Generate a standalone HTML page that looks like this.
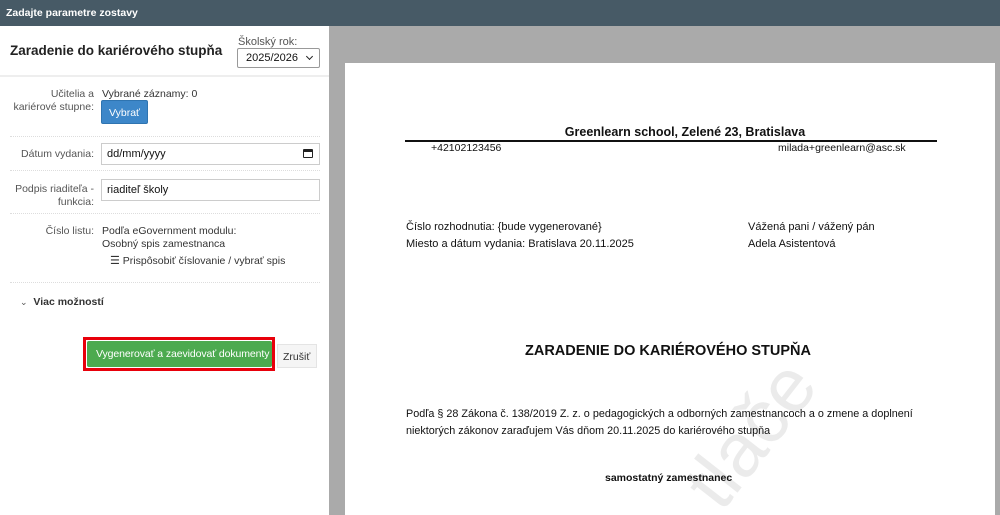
<!DOCTYPE html>
<html><head><meta charset="utf-8"><style>
*{box-sizing:border-box;margin:0;padding:0}
body{width:1000px;height:515px;overflow:hidden;font-family:"Liberation Sans",Arial,sans-serif;font-size:12px;color:#333;background:#fff;position:relative}
.top{position:absolute;left:0;top:0;width:1000px;height:26px;background:#475a66;color:#fff;font-weight:bold;font-size:10.5px;padding:7px 0 0 6px}
.left{position:absolute;left:0;top:26px;width:329px;height:489px;background:#fff}
.gray{position:absolute;left:329px;top:26px;width:671px;height:489px;background:#aaa;overflow:hidden}
.page{position:absolute;left:16px;top:37px;width:650px;height:460px;background:#fff;overflow:hidden}
.hdr{position:absolute;left:0;top:0;width:329px;height:51px;border-bottom:2px solid #eee}
.title{position:absolute;left:10px;top:17px;font-size:13.5px;font-weight:bold;color:#222;white-space:nowrap}
.yl{position:absolute;left:238px;top:10px;color:#555;font-size:11px}
.sel{position:absolute;left:237px;top:22px;width:83px;height:20px;border:1px solid #999;border-radius:2px;padding:3px 0 0 8px;color:#111;font-size:11px}
.sel:after{content:"";position:absolute;right:7px;top:5px;width:4px;height:4px;border-right:1.3px solid #222;border-bottom:1.3px solid #222;transform:rotate(45deg)}
.row{position:absolute;left:10px;width:310px;border-bottom:1px dotted #ddd}
.lab{position:absolute;right:226px;text-align:right;color:#555;line-height:13px;font-size:10.5px;white-space:nowrap}
.val{position:absolute;left:92px;color:#333;font-size:10.5px;line-height:13px;white-space:nowrap}
.inp{position:absolute;left:91px;width:219px;height:22px;border:1px solid #ccc;padding:4px 0 0 5px;font-size:11px;color:#111}
.btn{position:absolute;left:91px;top:21px;width:47px;height:24px;background:#3d87c9;color:#fff;border-radius:2px;padding:6px 0 0 7px;font-size:10.5px;border:1px solid #2f74b0}
.pg{position:absolute;font-size:11px;color:#111;white-space:nowrap}
</style></head><body>
<div class="top">Zadajte parametre zostavy</div>
<div class="left">
 <div class="hdr"><div class="title">Zaradenie do kariérového stupňa</div><div class="yl">Školský rok:</div><div class="sel">2025/2026</div></div>
 <div class="row" style="top:53px;height:58px">
  <div class="lab" style="top:9px">Učitelia a<br>kariérové stupne:</div>
  <div class="val" style="top:9px">Vybrané záznamy: 0</div>
  <div class="btn">Vybrať</div>
 </div>
 <div class="row" style="top:111px;height:34px">
  <div class="lab" style="top:11px">Dátum vydania:</div>
  <div class="inp" style="top:6px">dd/mm/yyyy<span style="position:absolute;right:6px;top:5px;width:10px;height:9px;border:1.5px solid #222;border-top-width:3px;border-radius:1px"></span></div>
 </div>
 <div class="row" style="top:145px;height:43px">
  <div class="lab" style="top:12px">Podpis riaditeľa -<br>funkcia:</div>
  <div class="inp" style="top:8px">riaditeľ školy</div>
 </div>
 <div class="row" style="top:188px;height:69px">
  <div class="lab" style="top:11px">Číslo listu:</div>
  <div class="val" style="top:11px">Podľa eGovernment modulu:<br>Osobný spis zamestnanca</div>
  <div class="val" style="top:41px;left:100px"><span style="font-size:11px">☰</span> Prispôsobiť číslovanie / vybrať spis</div>
 </div>
 <div style="position:absolute;left:20px;top:270px;font-size:10.5px;font-weight:bold;color:#333"><span style="font-weight:normal;font-size:9px;color:#555">⌄</span>&nbsp; Viac možností</div>
 <div style="position:absolute;left:83px;top:311px;width:192px;height:34px;border:3px solid #e8000b"></div>
 <div style="position:absolute;left:87px;top:315px;width:185px;height:26px;background:#4caa4f;color:#fff;font-size:10.5px;padding:7px 0 0 9px;border-radius:2px;white-space:nowrap;letter-spacing:-0.1px">Vygenerovať a zaevidovať dokumenty</div>
 <div style="position:absolute;left:277px;top:318px;width:40px;height:24px;background:#f5f5f5;border:1px solid #e4e4e4;font-size:10.5px;padding:6px 0 0 5px">Zrušiť</div>
</div>
<div class="gray"><div class="page">
 <div style="position:absolute;left:385px;top:385px;font-size:76px;line-height:72px;color:#ebebeb;transform:rotate(-52deg);transform-origin:left bottom;white-space:nowrap">tlače</div>
 <div class="pg" style="left:0;width:650px;text-align:center;top:62px;font-size:12.5px;font-weight:bold;padding-left:30px">Greenlearn school, Zelené 23, Bratislava</div>
 <div style="position:absolute;left:60px;top:77px;width:532px;border-top:2px solid #111"></div>
 <div class="pg" style="left:86px;top:79px;font-size:10.5px">+42102123456</div>
 <div class="pg" style="left:433px;top:79px;font-size:10.5px">milada+greenlearn@asc.sk</div>
 <div class="pg" style="left:61px;top:156px;line-height:17px">Číslo rozhodnutia: {bude vygenerované}<br>Miesto a dátum vydania: Bratislava 20.11.2025</div>
 <div class="pg" style="left:403px;top:156px;line-height:17px">Vážená pani / vážený pán<br>Adela Asistentová</div>
 <div class="pg" style="left:180px;top:280px;font-size:14.5px;font-weight:bold">ZARADENIE DO KARIÉROVÉHO STUPŇA</div>
 <div class="pg" style="left:61px;top:343px;line-height:17px;font-size:10.8px">Podľa § 28 Zákona č. 138/2019 Z. z. o pedagogických a odborných zamestnancoch a o zmene a doplnení<br>niektorých zákonov zaraďujem Vás dňom 20.11.2025 do kariérového stupňa</div>
 <div class="pg" style="left:260px;top:409px;font-size:10.5px;font-weight:bold">samostatný zamestnanec</div>
</div></div>
</body></html>
